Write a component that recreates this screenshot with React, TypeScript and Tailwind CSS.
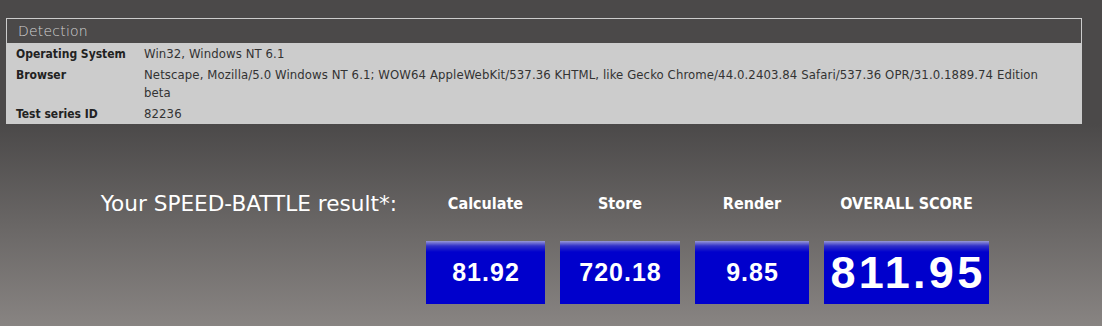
export default function App() {
  const rows = [
    { label: 'Operating System', value: 'Win32, Windows NT 6.1' },
    {
      label: 'Browser',
      value:
        'Netscape, Mozilla/5.0 Windows NT 6.1; WOW64 AppleWebKit/537.36 KHTML, like Gecko Chrome/44.0.2403.84 Safari/537.36 OPR/31.0.1889.74 Edition beta',
    },
    { label: 'Test series ID', value: '82236' },
  ];

  const scores = [
    { title: 'Calculate', value: '81.92', w: 'w-[119px]', big: false },
    { title: 'Store', value: '720.18', w: 'w-[120px]', big: false },
    { title: 'Render', value: '9.85', w: 'w-[114px]', big: false },
    { title: 'OVERALL SCORE', value: '811.95', w: 'w-[165px]', big: true },
  ];

  return (
    <div className="w-[1102px] h-[326px] overflow-hidden flex flex-col font-['DejaVu_Sans_Condensed',sans-serif]">
      {/* Detection panel */}
      <div className="bg-[#4b4949] pt-[18px] pl-[6px] pr-[20px]">
        <div className="border border-b-0 border-[#cccccc]">
          <div className="h-[24px] flex items-center pl-[11px] text-[14px] font-extralight text-[#d2d2d2] font-['DejaVu_Sans',sans-serif] tracking-[0.2px]">
            Detection
          </div>
          <div className="bg-[#cccccc] pt-[2px] pb-[1px] flex flex-col gap-[3px]">
            {rows.map((r) => (
              <div key={r.label} className="flex leading-[18px]">
                <div className="w-[137px] pl-[9px] shrink-0 text-[12px] font-bold text-[#222]">
                  {r.label}
                </div>
                <div className="w-[912px] text-[13px] tracking-[0.1px] text-[#333]">{r.value}</div>
              </div>
            ))}
          </div>
        </div>
      </div>

      {/* Result */}
      <div className="flex-1 bg-[linear-gradient(to_bottom,#4b4949,#888482)] pt-[66px]">
        <div className="flex">
          <div className="w-[426px] pr-[29px] text-right text-white text-[21.6px] leading-[28px] font-['DejaVu_Sans',sans-serif]">
            Your SPEED-BATTLE result*:
          </div>
          <div className="flex gap-[15px]">
            {scores.map((s) => (
              <div key={s.title} className={`${s.w} flex flex-col items-center`}>
                <div className="h-[28px] leading-[28px] text-white text-[16px] font-bold">
                  {s.title}
                </div>
                <div className="mt-[23px] w-full h-[63px] flex items-center justify-center bg-[linear-gradient(to_bottom,#9898d8_0px,#3030c8_5px,#0000cc_11px)]">
                  <span
                    className={
                      s.big
                        ? "text-white font-bold text-[45px] tracking-[3.3px] pl-[3px] font-['Liberation_Sans',sans-serif]"
                        : "text-white font-bold text-[25px] tracking-[1px] pl-[1px] font-['Liberation_Sans',sans-serif]"
                    }
                  >
                    {s.value}
                  </span>
                </div>
              </div>
            ))}
          </div>
        </div>
      </div>
    </div>
  );
}
